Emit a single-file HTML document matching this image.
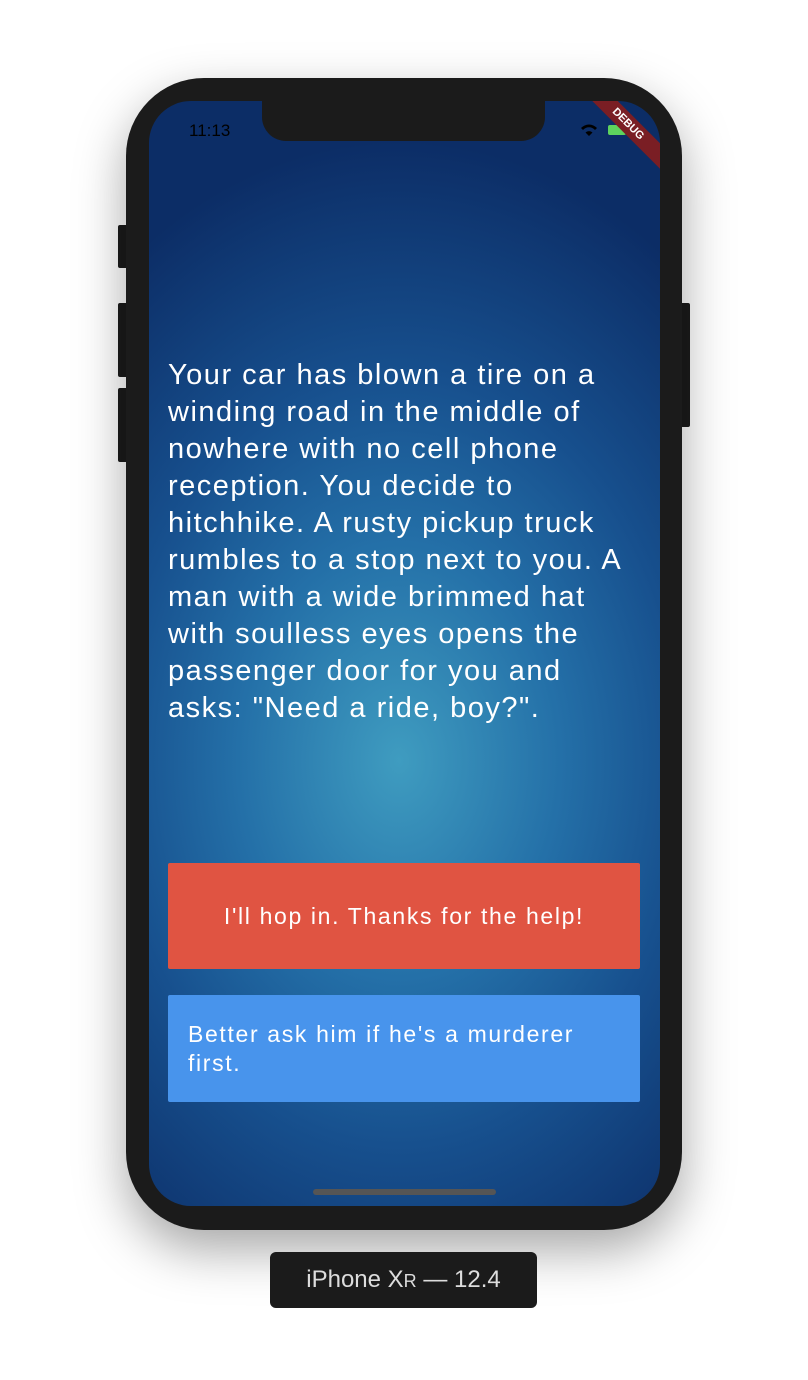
<!DOCTYPE html>
<html><head><style>
body{margin:0;width:808px;height:1380px;background:#fff;position:relative;overflow:hidden;font-family:"Liberation Sans",sans-serif}
.phone{position:absolute;left:126px;top:78px;width:556px;height:1152px;background:#1b1b1b;border-radius:78px;box-shadow:0 20px 50px rgba(0,0,0,.35)}
.btn{position:absolute;background:#1b1b1b;border-radius:2px}
.screen{position:absolute;left:149px;top:101px;width:511px;height:1105px;border-radius:42px;overflow:hidden;
background:radial-gradient(ellipse 460px 620px at 250px 660px,#3f9cc0 0%,#2470a8 35%,#17508e 62%,#0c2d66 100%)}
.notch{position:absolute;left:113px;top:0;width:283px;height:40px;background:#1b1b1b;border-radius:0 0 24px 24px}
.time{position:absolute;left:40px;top:20px;font-size:17px;color:#000}
.story{position:absolute;left:19px;top:256px;font-size:29px;line-height:37px;color:#fff;letter-spacing:1.5px;white-space:nowrap}
.b{position:absolute;left:19px;width:472px;height:106px;color:#fff;font-size:23px;letter-spacing:1.65px;display:flex;align-items:center;border-radius:2px}
.red{top:762px;background:#e05442;justify-content:center}
.blue{top:894px;height:107px;background:#4894ec;padding-left:20px;box-sizing:border-box;line-height:29px}
.home{position:absolute;left:164px;top:1088px;width:183px;height:6px;background:#555;border-radius:3px}
.debug{position:absolute;right:-28px;top:14px;width:120px;height:18px;background:#7a1e24;transform:rotate(45deg);color:#fff;font-size:11px;font-weight:bold;text-align:center;line-height:18px}
.label{position:absolute;left:270px;top:1252px;width:267px;height:56px;background:#1b1b1b;border-radius:6px;color:#ddd;font-size:24px;line-height:56px;text-align:center}
</style></head><body>
<div class="btn" style="left:118px;top:225px;width:10px;height:43px"></div>
<div class="btn" style="left:118px;top:303px;width:10px;height:74px"></div>
<div class="btn" style="left:118px;top:388px;width:10px;height:74px"></div>
<div class="btn" style="left:680px;top:303px;width:10px;height:124px"></div>
<div class="phone"></div>
<div class="screen">
<div class="notch"></div>
<div class="time">11:13</div>
<svg style="position:absolute;left:430px;top:22px" width="20" height="14" viewBox="0 0 20 14"><path d="M10 13L6.5 9.5A5 5 0 0 1 13.5 9.5Z M2 5a11 11 0 0 1 16 0l-2 2a8 8 0 0 0-12 0z" fill="#000"/></svg>
<div style="position:absolute;left:459px;top:24px;width:18px;height:10px;background:#5ed35e;border-radius:2px"></div>
<div class="debug">DEBUG</div>
<div class="story">Your car has blown a tire on a<br>winding road in the middle of<br>nowhere with no cell phone<br>reception. You decide to<br>hitchhike. A rusty pickup truck<br>rumbles to a stop next to you. A<br>man with a wide brimmed hat<br>with soulless eyes opens the<br>passenger door for you and<br>asks: "Need a ride, boy?".</div>
<div class="b red">I'll hop in. Thanks for the help!</div>
<div class="b blue">Better ask him if he's a murderer<br>first.</div>
<div class="home"></div>
</div>
<div class="label">iPhone X<span style="font-size:18px">R</span> — 12.4</div>
</body></html>
